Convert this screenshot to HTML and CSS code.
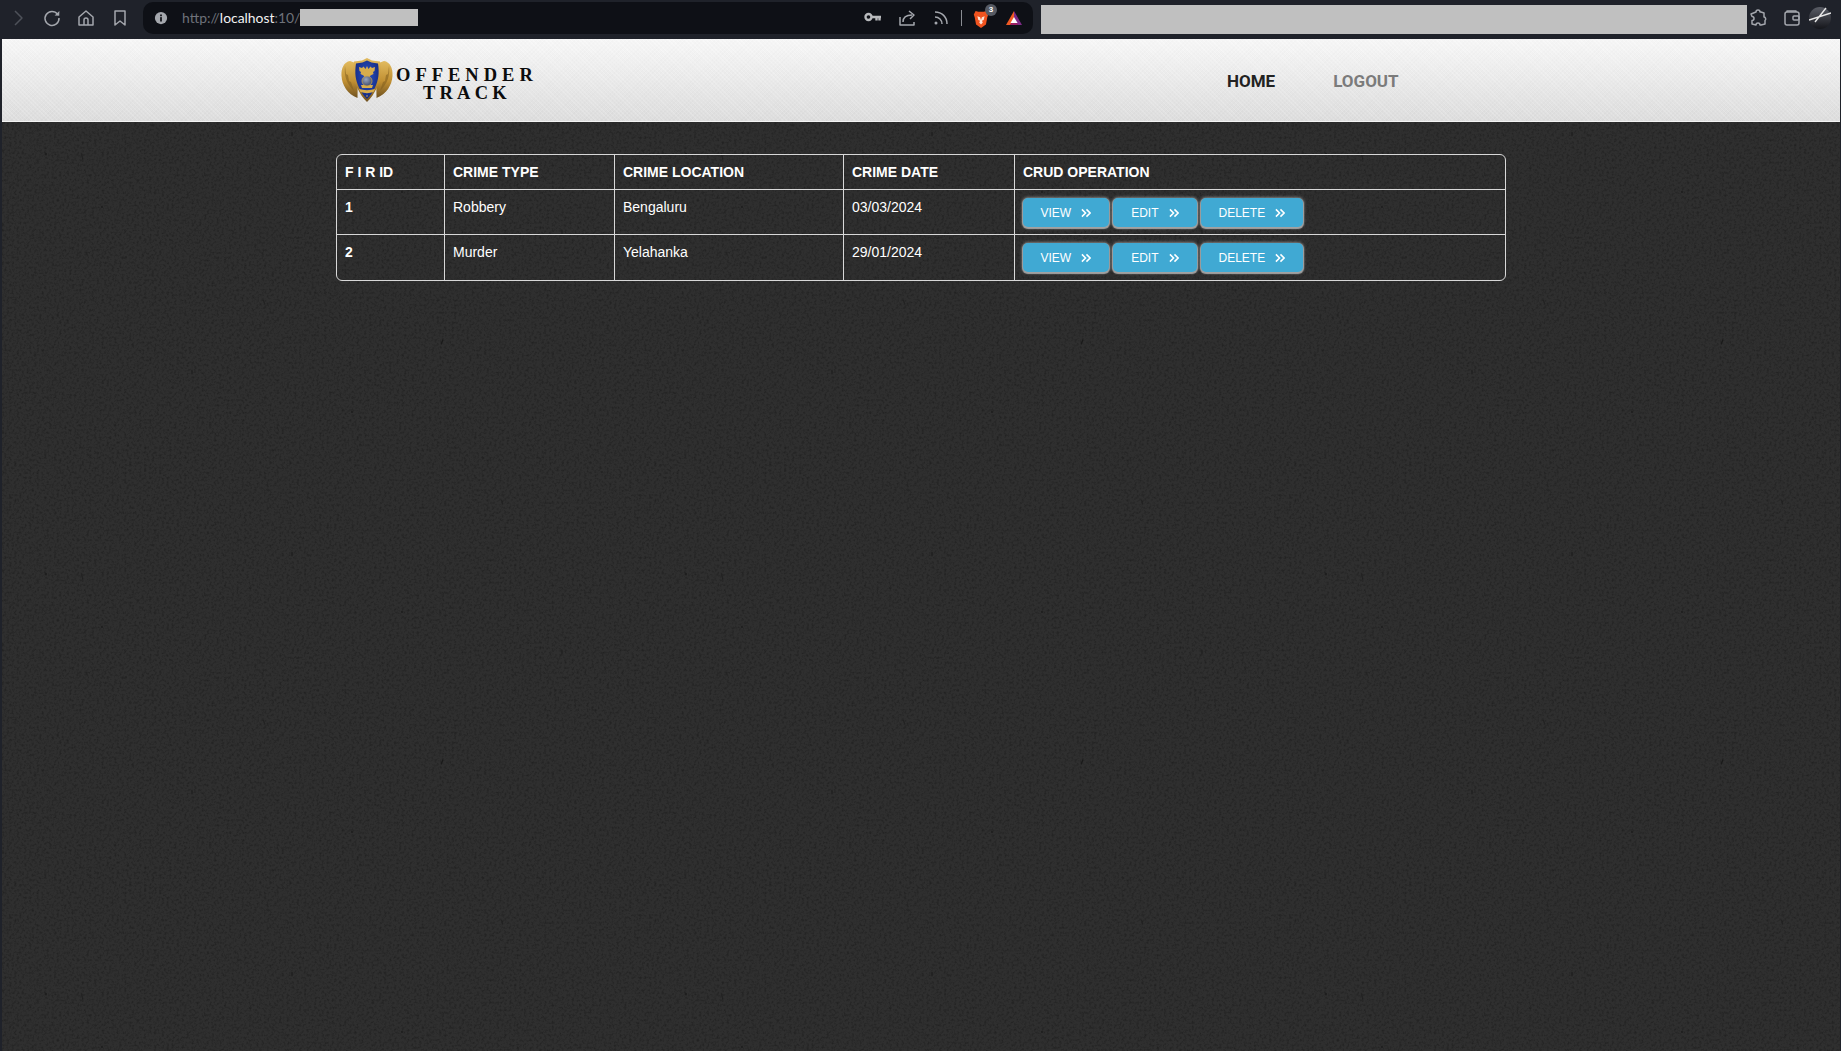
FILE: index.html
```html
<!DOCTYPE html>
<html lang="en">
<head>
<meta charset="utf-8">
<title>Offender Track</title>
<link rel="stylesheet" href="styles.css">
</head>
<body>
<div class="toolbar">
  <div class="tool-btn"><svg class="ic" viewBox="0 0 20 20"><path class="dim" d="M7 3l7 7-7 7"/></svg></div>
  <div class="tool-btn"><svg class="ic" viewBox="0 0 20 20"><path d="M15.6 6.2A7 7 0 1 0 17 10"/><path class="solid" d="M12.6 7.4l4.6.3.2-4.7z"/></svg></div>
  <div class="tool-btn"><svg class="ic" viewBox="0 0 20 20"><path d="M3 9l7-6 7 6v8H3z"/><path d="M8 17v-5a2 2 0 0 1 4 0v5"/></svg></div>
  <div class="tool-btn"><svg class="ic" viewBox="0 0 20 20"><path d="M5 3h10v14l-5-4-5 4z"/></svg></div>
  <div class="address">
    <svg class="info" viewBox="0 0 16 16"><circle cx="8" cy="8" r="7"/><rect class="hole" x="7" y="7" width="2" height="5"/><rect class="hole" x="7" y="4" width="2" height="2"/></svg>
    <div class="url"><span class="url-dim">http://</span><span class="url-host">localhost</span><span class="url-dim">:10/</span><span class="redact"></span></div>
    <div class="address-tools">
      <span class="addr-btn"><svg class="ic-key" viewBox="0 0 18 12"><circle cx="4.500" cy="5" r="3"/><path d="M8 5h9M12.500 5v3.500M15.500 5v3.500"/></svg></span>
      <span class="addr-btn"><svg class="ic" viewBox="0 0 20 20"><path d="M3 9v8h14v-3"/><path d="M6 14c0-5 4-7 9-7"/><path d="M12 3l5 4-4 4"/></svg></span>
      <span class="addr-btn"><svg class="ic" viewBox="0 0 20 20"><path d="M4 4c7 0 12 5 12 12"/><path d="M4 9c4 0 7 3 7 7"/><circle class="solid" cx="5" cy="15" r="1.500"/></svg></span>
      <span class="sep"></span>
      <span class="brave">
        <svg class="ic-brave" viewBox="0 0 20 22"><path class="brave-shield" d="M4 2l3 1h6l3-1 2 4-1 3-1.500 8L10 21l-5.500-4L3 9 2 6z"/><path class="brave-face" d="M6 8l3 1 1 3 1-3 3-1-1 4-2 1 1 2-2 2-2-2 1-2-2-1z"/></svg>
        <span class="badge">3</span>
      </span>
      <svg class="ic-bat" viewBox="0 0 20 18"><path class="bat-a" d="M10 1l9 16h-5l-4-7z"/><path class="bat-b" d="M10 1L1 17h5l4-7z"/><path class="bat-d" d="M5.500 17L10 10l4.500 7z"/><path class="bat-c" d="M10 8l4 6.500H6z"/></svg>
    </div>
  </div>
  <div class="search-redact"></div>
  <div class="tool-btn puzzle"><svg class="ic" viewBox="0 0 20 20"><path d="M8 4a2 2 0 0 1 4 0h1l3 1v4a2 2 0 0 1 1 3.500V16l-4 1h-1a2 2 0 0 0-4 0l-4-1v-3.500a2 2 0 0 0 0-4L3 6l5-2z"/></svg></div>
  <div class="tool-btn"><svg class="ic" viewBox="0 0 20 20"><rect x="3" y="4" width="14" height="13" rx="2"/><path d="M5 4V3h9v1"/><rect x="11" y="8" width="6" height="4" rx="1"/></svg></div>
  <div class="avatar"><svg viewBox="0 0 22 22"><defs><linearGradient id="av" x1="0" y1="0" x2="0" y2="1"><stop offset="0" stop-color="#5a5d66"/><stop offset="1" stop-color="#15161b"/></linearGradient></defs><circle fill="url(#av)" cx="11" cy="11" r="11"/><path class="av-line" d="M0 13l22-7M6 15L17 1"/></svg></div>
</div>

<div class="viewport">
  <header class="site-header">
    <a class="brand">
      <svg class="crest" viewBox="0 0 52 44">
        <defs>
          <linearGradient id="gold" x1="0" y1="0" x2="0" y2="1"><stop offset="0" stop-color="#e2bb5f"/><stop offset=".55" stop-color="#c08f32"/><stop offset="1" stop-color="#6f5120"/></linearGradient>
          <radialGradient id="blue" cx=".5" cy=".4" r=".6"><stop offset="0" stop-color="#2a52c6"/><stop offset="1" stop-color="#14297f"/></radialGradient>
          <radialGradient id="orb" cx=".4" cy=".35" r=".7"><stop offset="0" stop-color="#9aa6bd"/><stop offset="1" stop-color="#39476c"/></radialGradient>
        </defs>
        <path fill="url(#gold)" d="M9 3C3 4 0 10 .5 18c.5 9 6 18 16 22L17 6z"/>
        <path fill="url(#gold)" d="M43 3c6 1 9 7 8.500 15-.5 9-6 18-16 22L35 6z"/>
        <path class="wing-dark" d="M4 8c-1 9 1 17 9 25l-3-9-2-1-1-6-2-1zM48 8c1 9-1 17-9 25l3-9 2-1 1-6 2-1z"/>
        <path fill="url(#gold)" d="M26 0l5 2.500 8 1c2 11 1 18-3 26-3 6-6 11-10 14.500-4-3.500-7-8.500-10-14.500-4-8-5-15-3-26l8-1z"/>
        <path fill="url(#blue)" d="M26 2.500l4.500 2 6.500 1c1.500 10 .5 16.500-3 24-2.500 5-5 9-8 11.500-3-2.500-5.500-6.500-8-11.500-3.500-7.500-4.500-14-3-24l6.500-1z"/>
        <path class="eagle" d="M26 8l1.500 3 2-2.500 1.500 1.500 3-1-.5 4-1.500 1 .5 2-3 1.500-1 1.500h-5l-1-1.500-3-1.500.5-2-1.500-1-.5-4 3 1L22.500 8.500l2 2.500z"/>
        <path class="eagle" d="M18 31c5 1.500 11 1.500 16 0l-1.500 3c-4 1.500-9 1.500-13 0z"/>
        <path class="eagle" d="M20 27h12l-1 3H21z"/>
        <circle fill="url(#orb)" class="orb" cx="26" cy="23" r="5"/>
        <circle class="eagle" cx="26" cy="38" r=".8"/>
      </svg>
      <div class="brand-text"><div>OFFENDER</div><div class="brand-line2">TRACK</div></div>
    </a>
    <nav class="nav">
      <a class="nav-link active">HOME</a>
      <a class="nav-link">LOGOUT</a>
    </nav>
  </header>
  <main class="content">
    <table class="grid">
      <colgroup>
        <col class="c1"><col class="c2"><col class="c3"><col class="c4"><col class="c5">
      </colgroup>
      <thead>
        <tr><th>F I R ID</th><th>CRIME TYPE</th><th>CRIME LOCATION</th><th>CRIME DATE</th><th>CRUD OPERATION</th></tr>
      </thead>
      <tbody>
        <tr>
          <td class="id">1</td><td>Robbery</td><td>Bengaluru</td><td>03/03/2024</td>
          <td class="ops">
            <div class="btns">
              <a class="btn">VIEW<svg class="chev" viewBox="0 0 11 10"><path d="M1 1l4 4-4 4M6 1l4 4-4 4"/></svg></a>
              <a class="btn">EDIT<svg class="chev" viewBox="0 0 11 10"><path d="M1 1l4 4-4 4M6 1l4 4-4 4"/></svg></a>
              <a class="btn">DELETE<svg class="chev" viewBox="0 0 11 10"><path d="M1 1l4 4-4 4M6 1l4 4-4 4"/></svg></a>
            </div>
          </td>
        </tr>
        <tr>
          <td class="id">2</td><td>Murder</td><td>Yelahanka</td><td>29/01/2024</td>
          <td class="ops">
            <div class="btns">
              <a class="btn">VIEW<svg class="chev" viewBox="0 0 11 10"><path d="M1 1l4 4-4 4M6 1l4 4-4 4"/></svg></a>
              <a class="btn">EDIT<svg class="chev" viewBox="0 0 11 10"><path d="M1 1l4 4-4 4M6 1l4 4-4 4"/></svg></a>
              <a class="btn">DELETE<svg class="chev" viewBox="0 0 11 10"><path d="M1 1l4 4-4 4M6 1l4 4-4 4"/></svg></a>
            </div>
          </td>
        </tr>
      </tbody>
    </table>
  </main>
</div>
</body>
</html>
```
FILE: styles.css
```css
* { box-sizing: border-box; }
html, body { margin: 0; height: 100%; }
body {
  background: #1f222a;
  font-family: "Liberation Sans", Arial, sans-serif;
  overflow: hidden;
  display: flex;
  flex-direction: column;
}

/* browser chrome */
.toolbar {
  height: 39px;
  flex: none;
  display: flex;
  align-items: flex-start;
  padding: 2px 0 0 1px;
}
.tool-btn {
  width: 34px;
  height: 32px;
  flex: none;
  display: flex;
  align-items: center;
  justify-content: center;
}
.ic { width: 20px; height: 20px; fill: none; stroke: #a4a7ad; stroke-width: 1.5; stroke-linejoin: round; }
.ic .dim { stroke: #4d5159; }
.ic .solid { fill: #a4a7ad; stroke: none; }
.address {
  width: 890px;
  height: 32px;
  flex: none;
  margin-left: 6px;
  background: #0e1016;
  border-radius: 10px;
  display: flex;
  align-items: center;
  padding: 0 10px 0 11px;
}
.info { width: 14px; height: 14px; fill: #a4a7ad; flex: none; }
.info .hole { fill: #0e1016; }
.url {
  margin-left: 14px;
  margin-top: -2px;
  display: flex;
  align-items: center;
  font-family: Lato, sans-serif;
  font-size: 13.9px;
}
.url-dim { color: #6f727a; }
.url-host { color: #f2f2f2; }
.redact { width: 118px; height: 17px; background: #c0c0c0; margin-top: 1px; }
.address-tools {
  margin-left: auto;
  display: flex;
  align-items: center;
}
.addr-btn { width: 34px; display: flex; align-items: center; justify-content: center; }
.ic-key { width: 18px; height: 12px; fill: none; stroke: #b8babd; stroke-width: 2.4; }
.sep { width: 1px; height: 16px; background: #8a8d93; margin-left: 3px; }
.brave { position: relative; width: 20px; height: 22px; display: block; margin-left: 9px; }
.ic-brave { width: 18px; height: 20px; display: block; margin: 2px 0 0 1px; }
.brave-shield { fill: #f0531f; }
.brave-face { fill: #fbe6dc; }
.badge {
  position: absolute;
  top: -3px;
  right: -6px;
  width: 12px;
  height: 12px;
  border-radius: 50%;
  background: #565a63;
  color: #fff;
  font-size: 8px;
  font-weight: 700;
  line-height: 12px;
  text-align: center;
}
.ic-bat { width: 18px; height: 16px; margin-left: 14px; }
.bat-a { fill: #7d2a86; }
.bat-b { fill: #f15a24; }
.bat-c { fill: #fff; }
.bat-d { fill: #9e1f63; }
.search-redact {
  width: 706px;
  height: 29px;
  flex: none;
  margin: 3px 0 0 8px;
  background: #c0c0c0;
}
.puzzle { margin-left: -6px; margin-right: 0; }
.avatar { width: 22px; height: 22px; flex: none; margin: 5px 0 0 0; }
.avatar svg { display: block; width: 22px; height: 22px; }
.av-line { stroke: #e8e8e8; stroke-width: 1.4; fill: none; }

/* page */
.viewport {
  flex: 1;
  margin: 0 1px 0 2px;
  display: flex;
  flex-direction: column;
  min-height: 0;
}
.site-header {
  height: 83px;
  flex: none;
  display: flex;
  align-items: center;
  padding: 0 0 0 339px;
  border-bottom: 1px solid #f4f4f4;
  background:
    repeating-linear-gradient(45deg, rgba(255,255,255,.1) 0 1px, rgba(0,0,0,.006) 1px 3px),
    repeating-linear-gradient(-45deg, rgba(0,0,0,.006) 0 1px, rgba(255,255,255,.05) 1px 3px),
    linear-gradient(#f8f8f8, #dddddd);
}
.brand { display: flex; align-items: center; width: 886px; }
.crest { width: 52px; height: 44px; flex: none; }
.wing-dark { fill: #7f5c1e; opacity: .55; }
.eagle { fill: #d8ad4c; }
.orb { stroke: #c9a04a; stroke-width: .8; }
.brand-text {
  margin-left: 3px;
  padding-top: 7px;
  font-family: "Liberation Serif", serif;
  font-weight: 700;
  font-size: 18.5px;
  line-height: 18px;
  letter-spacing: 5px;
  text-align: center;
  color: #0c0c0c;
}
.brand-line2 { letter-spacing: 4.2px; }
.nav { display: flex; gap: 58px; }
.nav-link {
  font-family: Roboto, sans-serif;
  font-weight: 700;
  font-size: 17px;
  padding-top: 2px;
  color: #7b7b7b;
}
.nav-link.active { color: #222; }

.content {
  flex: 1;
  min-height: 0;
  padding: 32px 0 0 334px;
  background-color: #2f2f2f;
  background-image: url("data:image/svg+xml,%3Csvg xmlns='http://www.w3.org/2000/svg' width='640' height='420'%3E%3Cfilter id='n' x='0' y='0' width='100%25' height='100%25'%3E%3CfeTurbulence type='fractalNoise' baseFrequency='.4' numOctaves='4' stitchTiles='stitch'/%3E%3CfeColorMatrix values='0 0 0 0 0 0 0 0 0 0 0 0 0 0 0 0 0 0 -2.2 1.25'/%3E%3C/filter%3E%3Crect width='640' height='420' filter='url(%23n)' opacity='.28'/%3E%3Cg fill='%231a1a1a'%3E%3Cellipse cx='44' cy='32' rx='.8' ry='1.500'/%3E%3Cellipse cx='80' cy='34' rx='.8' ry='4' transform='rotate(-15 80 34)' opacity='.6'/%3E%3Ccircle cx='100' cy='85' r='.9'/%3E%3Cellipse cx='290' cy='12' rx='.8' ry='2.500' opacity='.8'/%3E%3Cellipse cx='85' cy='132' rx='.8' ry='3' transform='rotate(-25 85 132)' opacity='.5'/%3E%3Ccircle cx='124' cy='135' r='.7'/%3E%3Cellipse cx='262' cy='180' rx='.8' ry='3' transform='rotate(-20 262 180)' opacity='.6'/%3E%3Ccircle cx='400' cy='70' r='.9'/%3E%3Cellipse cx='190' cy='250' rx='.8' ry='2.500' opacity='.7'/%3E%3Ccircle cx='350' cy='290' r='.9'/%3E%3Cellipse cx='440' cy='220' rx='.8' ry='3' transform='rotate(20 440 220)'/%3E%3Cellipse cx='560' cy='110' rx='.8' ry='2.500' opacity='.7'/%3E%3Ccircle cx='600' cy='350' r='.8'/%3E%3Cellipse cx='500' cy='380' rx='.8' ry='2.500' transform='rotate(-15 500 380)' opacity='.6'/%3E%3C/g%3E%3C/svg%3E");
}
.grid {
  width: 1170px;
  table-layout: fixed;
  border-collapse: separate;
  border-spacing: 0;
  border: 1px solid #d8d8d8;
  border-radius: 6px;
  color: #fff;
  font-size: 14px;
}
.c1 { width: 108px; }
.c2 { width: 170px; }
.c3 { width: 229px; }
.c4 { width: 171px; }
.grid th, .grid td {
  text-align: left;
  vertical-align: top;
  border-right: 1px solid #d8d8d8;
  border-bottom: 1px solid #d8d8d8;
  padding: 9px 8px;
}
.grid th:last-child, .grid td:last-child { border-right: 0; }
.grid tbody tr:last-child td { border-bottom: 0; }
.grid th { height: 35px; }
.grid td { height: 45px; }
.id { font-weight: 700; }
.grid td.ops { padding: 8px 8px 0 7.5px; }
.btns { display: flex; gap: 4px; }
.btn {
  height: 29px;
  display: flex;
  align-items: center;
  gap: 10px;
  padding: 0 18px;
  background: #40a9d3;
  border-radius: 5px;
  color: #fff;
  font-size: 12px;
  box-shadow: 0 1px 1px 1px #a2a2a2, 0 0 3px 1px rgba(170,170,170,.6);
}
.chev { width: 10px; height: 10px; fill: none; stroke: #fff; stroke-width: 1.7; }
```
